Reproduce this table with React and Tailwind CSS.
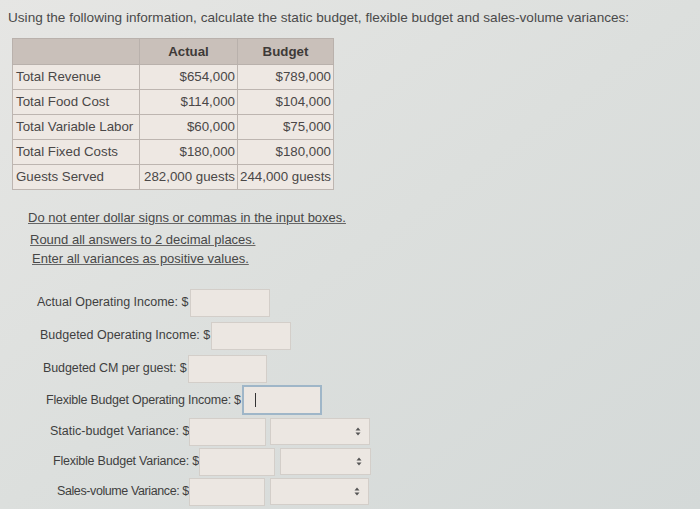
import React from 'react';

const rows = [
  { label: 'Total Revenue', actual: '$654,000', budget: '$789,000' },
  { label: 'Total Food Cost', actual: '$114,000', budget: '$104,000' },
  { label: 'Total Variable Labor', actual: '$60,000', budget: '$75,000' },
  { label: 'Total Fixed Costs', actual: '$180,000', budget: '$180,000' },
  { label: 'Guests Served', actual: '282,000 guests', budget: '244,000 guests' },
];

const Field = ({ className = '' }) => (
  <div className={`h-[28px] bg-[#ece7e2] border border-[#d3cec9] ${className}`} />
);

const Select = ({ className = '' }) => (
  <div className={`h-[27px] bg-[#ece7e2] border border-[#d3cec9] flex items-center justify-end pr-[8px] ${className}`}>
    <svg width="6" height="9" viewBox="0 0 6 9">
      <path d="M3 0.5 L5.5 3.5 H0.5 Z M3 8.5 L5.5 5.5 H0.5 Z" fill="#555" />
    </svg>
  </div>
);

export default function App() {
  return (
    <div
      className="w-[700px] h-[509px] overflow-hidden bg-gradient-to-br from-[#e6e6e4] via-[#dcdfdd] to-[#d4d9d8] text-[#454545]"
      style={{ fontFamily: '"Liberation Sans", Arial, sans-serif' }}
    >
      <p className="pt-[9px] pl-[8px] text-[13.6px] leading-[18px] text-[#4a4a4a]">
        Using the following information, calculate the static budget, flexible budget and sales-volume variances:
      </p>

      <table className="ml-[12px] mt-[11px] w-[322px] border-collapse text-[13.3px] text-[#4a4747]">
        <thead>
          <tr className="h-[26px] bg-[#c9c0ba] font-bold text-[#3e3a38]">
            <th className="border border-[#b9b1ac] w-[127px]"></th>
            <th className="border border-[#b9b1ac] w-[98px] text-center">Actual</th>
            <th className="border border-[#b9b1ac] text-center">Budget</th>
          </tr>
        </thead>
        <tbody>
          {rows.map((r) => (
            <tr key={r.label} className="h-[25px] bg-[#eee8e3]">
              <td className="border border-[#bdb5b0] pl-[3px] whitespace-nowrap">{r.label}</td>
              <td className="border border-[#bdb5b0] pr-[2px] text-right whitespace-nowrap">{r.actual}</td>
              <td className="border border-[#bdb5b0] pr-[2px] text-right whitespace-nowrap">{r.budget}</td>
            </tr>
          ))}
        </tbody>
      </table>

      <div className="mt-[18px] flex flex-col text-[13px] leading-[19px] text-[#474747]">
        <span className="ml-[28px] underline decoration-[#666]">Do not enter dollar signs or commas in the input boxes.</span>
        <span className="ml-[30px] mt-[3px] underline decoration-[#666]">Round all answers to 2 decimal places.</span>
        <span className="ml-[32px] underline decoration-[#666]">Enter all variances as positive values.</span>
      </div>

      <div className="mt-[20px] flex flex-col text-[12.5px] text-[#3f3f3f]">
        <div className="ml-[37px] flex items-center h-[29px]">
          <span>Actual Operating Income: $</span>
          <Field className="ml-[2px] w-[80px]" />
        </div>
        <div className="ml-[40px] mt-[4px] flex items-center h-[29px]">
          <span>Budgeted Operating Income: $</span>
          <Field className="ml-[1px] w-[80px]" />
        </div>
        <div className="ml-[43px] mt-[4px] flex items-center h-[29px]">
          <span className="tracking-[-0.1px]">Budgeted CM per guest: $</span>
          <Field className="ml-[1px] w-[79px]" />
        </div>
        <div className="ml-[46px] mt-[2px] flex items-center h-[30px]">
          <span className="tracking-[-0.23px]">Flexible Budget Operating Income: $</span>
          <div className="ml-[1px] w-[80px] h-[30px] bg-[#ece7e2] border-2 border-[#9fb6c8] flex items-center pl-[11px]">
            <div className="w-px h-[14px] bg-[#333]" />
          </div>
        </div>
        <div className="ml-[50px] mt-[3px] flex items-center h-[27px]">
          <span>Static-budget Variance: $</span>
          <Field className="w-[77px] h-[27px]" />
          <Select className="ml-[4px] w-[100px]" />
        </div>
        <div className="ml-[53px] mt-[3px] flex items-center h-[27px]">
          <span className="tracking-[-0.22px]">Flexible Budget Variance: $</span>
          <Field className="w-[76px] h-[27px]" />
          <Select className="ml-[5px] w-[91px]" />
        </div>
        <div className="ml-[57px] mt-[3px] flex items-center h-[27px]">
          <span className="tracking-[-0.4px]">Sales-volume Variance: $</span>
          <Field className="w-[76px] h-[27px]" />
          <Select className="ml-[5px] w-[99px]" />
        </div>
      </div>
    </div>
  );
}
